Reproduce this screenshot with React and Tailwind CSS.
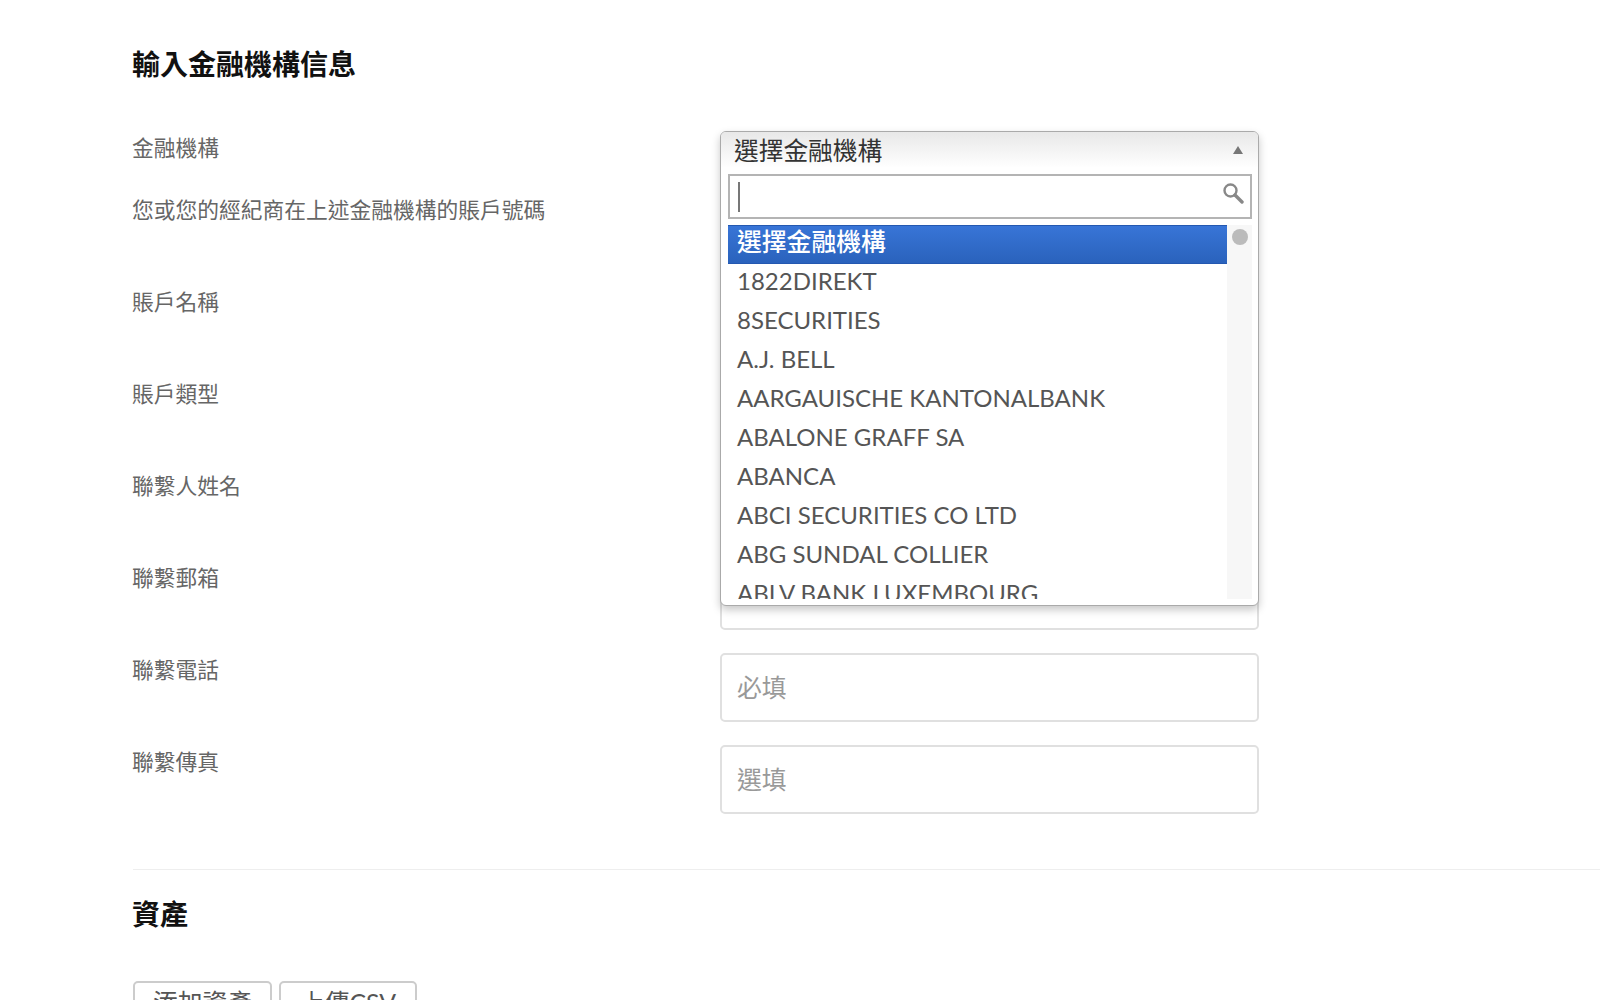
import React from "react";

const options = ["1822DIREKT","8SECURITIES","A.J. BELL","AARGAUISCHE KANTONALBANK","ABALONE GRAFF SA","ABANCA","ABCI SECURITIES CO LTD","ABG SUNDAL COLLIER","ABLV BANK LUXEMBOURG"];

function Row({ label, placeholder }) {
  return (
    <div className="grid grid-cols-[587px_539px] mb-[23px]">
      <div className="-ml-px text-[21.76px] leading-[34px] text-[#666]">{label}</div>
      <input placeholder={placeholder} className="h-[69px] w-full rounded-[5px] border-2 border-[#e0e0e0] bg-white px-[15px] text-[24.8px] outline-none placeholder:text-[#999]" />
    </div>
  );
}

function Dropdown() {
  return (
    <div className="absolute left-0 top-0 z-10 w-full h-[475px] rounded-[6px] border border-[#aaa] bg-white shadow-[0_4px_8px_rgba(0,0,0,0.22)] overflow-hidden">
      <div className="flex h-[36px] items-center justify-between bg-gradient-to-b from-[#e8e8e8] to-white pl-[13px] pr-[15px]">
        <span className="text-[24.7px] leading-[37px] text-[#333]">選擇金融機構</span>
        <span className="h-0 w-0 border-x-[5px] border-b-[8px] border-x-transparent border-b-[#777]" />
      </div>
      <div className="ml-[7px] mr-[6px] mt-[6px] flex h-[45px] items-center justify-between border-2 border-[#b4b4b4] pl-[8px] pr-[6px]">
        <span className="h-[30px] w-[1.5px] bg-[#777]" />
        <svg width="22" height="22" viewBox="0 0 22 22" className="-mt-2">
          <circle cx="8.5" cy="8.5" r="6" fill="none" stroke="#888" strokeWidth="2.4" />
          <path d="M13 13l7 7" stroke="#888" strokeWidth="3.4" strokeLinecap="round" />
        </svg>
      </div>
      <div className="ml-[7px] mr-[6px] mt-[6px] flex h-[374px] overflow-hidden">
        <div className="w-[499px] overflow-hidden">
          <div className="h-[39px] bg-gradient-to-b from-[#3875d7] to-[#2a62bc] pl-[9px] text-[24.8px] font-medium leading-[31px] text-white border-y border-[#2458b0]">選擇金融機構</div>
          {options.map((o) => (
            <div key={o} className="h-[39px] pl-[9px] text-[24px] leading-[34px] text-[#555] whitespace-nowrap">{o}</div>
          ))}
        </div>
        <div className="flex-1 bg-[#f7f7f7] pt-[4px]">
          <div className="mx-auto h-4 w-4 rounded-full bg-[#bbb]" />
        </div>
      </div>
    </div>
  );
}

export default function App() {
  return (
    <div className="h-[1000px] overflow-hidden bg-white pl-[133px] font-['Lato','Noto_Sans_CJK_TC',sans-serif]">
      <h1 className="-ml-px pt-[44px] text-[28px] font-bold leading-10 text-[#111]">輸入金融機構信息</h1>
      <div className="mt-[47px] grid grid-cols-[587px_539px] mb-6">
        <div className="-ml-px text-[21.76px] leading-[34px] text-[#666]">金融機構</div>
        <div className="relative h-[38px]"><Dropdown /></div>
      </div>
      <Row label="您或您的經紀商在上述金融機構的賬戶號碼" placeholder="必填" />
      <Row label="賬戶名稱" placeholder="必填" />
      <Row label="賬戶類型" placeholder="必填" />
      <Row label="聯繫人姓名" placeholder="必填" />
      <Row label="聯繫郵箱" placeholder="" />
      <Row label="聯繫電話" placeholder="必填" />
      <Row label="聯繫傳真" placeholder="選填" />
      <div className="mt-[55px] border-t border-[#eee] pt-[24px]">
        <h2 className="-ml-px text-[28px] font-bold leading-10 text-[#111]">資產</h2>
        <div className="mt-[47px] flex gap-[7px]">
          <button className="h-[44px] w-[139px] rounded-[5px] border-2 border-[#ccc] bg-white text-[24.8px] leading-10 text-[#555]">添加資產</button>
          <button className="h-[44px] w-[138px] rounded-[5px] border-2 border-[#ccc] bg-white text-[24.8px] leading-10 text-[#555]">上傳CSV</button>
        </div>
      </div>
    </div>
  );
}
